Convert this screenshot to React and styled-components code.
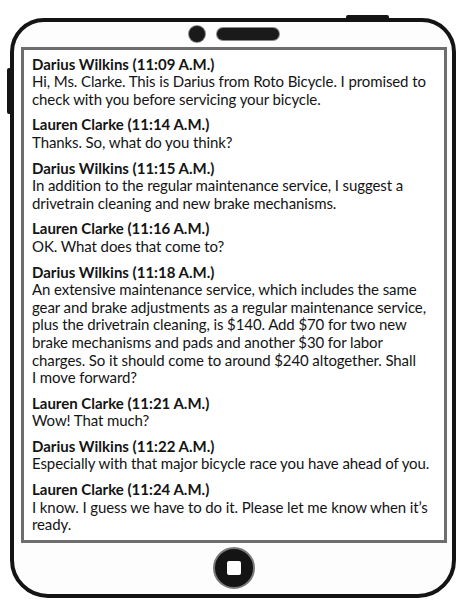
import React from 'react';
import styled, {createGlobalStyle} from 'styled-components';

const GlobalStyle = createGlobalStyle`
    html, body {
        margin: 0;
        padding: 0;
        background: #ffffff;
    }
    body {
        font-family: Lato, "Open Sans", sans-serif;
    }
`;

const Page = styled.div`
    width: 465px;
    height: 607px;
    padding: 18px 9px 9px 10px;
    box-sizing: border-box;
`;

const Phone = styled.div`
    position: relative;
    height: 100%;
    box-sizing: border-box;
    border: 4px solid #141414;
    border-radius: 34px 34px 38px 38px;
    background: #fdfdfd;
    display: flex;
    flex-direction: column;
    padding: 0 5px 0 7px;

    &::before {
        content: '';
        position: absolute;
        top: -7px;
        right: 63px;
        width: 43px;
        height: 5px;
        background: #141414;
        border-radius: 2px 2px 0 0;
    }

    &::after {
        content: '';
        position: absolute;
        left: -7px;
        top: 46px;
        width: 4px;
        height: 46px;
        background: #141414;
        border-radius: 2px 0 0 2px;
    }
`;

const TopBar = styled.div`
    height: 25px;
    display: flex;
    align-items: center;
    justify-content: center;
    gap: 12px;
`;

const Camera = styled.div`
    width: 16px;
    height: 16px;
    border-radius: 50%;
    background: #1a1a1a;
    box-shadow: 0 0 0 1px #888;
`;

const Speaker = styled.div`
    width: 62px;
    height: 12px;
    border-radius: 7px;
    background: #1a1a1a;
    box-shadow: 0 0 0 1px #888;
`;

const Screen = styled.div`
    flex: 1;
    border: 3px solid #6e6e6e;
    background: #ffffff;
    padding: 6px 8px;
    display: flex;
    flex-direction: column;
    gap: 8px;
    color: #141414;
`;

const Message = styled.div`
    font-size: 15px;
    line-height: 17.6px;
`;

const Name = styled.div`
    font-weight: 700;
    white-space: nowrap;
`;

const Line = styled.div`
    white-space: nowrap;
    letter-spacing: -0.1px;
`;

const BottomBar = styled.div`
    height: 52px;
    display: flex;
    align-items: center;
    justify-content: center;
`;

const HomeButton = styled.div`
    width: 38px;
    height: 38px;
    border-radius: 50%;
    background: #141414;
    border: 2px solid #7a7a7a;
    display: flex;
    align-items: center;
    justify-content: center;
`;

const HomeSquare = styled.div`
    width: 14px;
    height: 14px;
    border-radius: 2px;
    background: #ffffff;
`;

const messages = [
    {name: 'Darius Wilkins (11:09 A.M.)', lines: [
        'Hi, Ms. Clarke. This is Darius from Roto Bicycle. I promised to',
        'check with you before servicing your bicycle.',
    ]},
    {name: 'Lauren Clarke (11:14 A.M.)', lines: [
        'Thanks. So, what do you think?',
    ]},
    {name: 'Darius Wilkins (11:15 A.M.)', lines: [
        'In addition to the regular maintenance service, I suggest a',
        'drivetrain cleaning and new brake mechanisms.',
    ]},
    {name: 'Lauren Clarke (11:16 A.M.)', lines: [
        'OK. What does that come to?',
    ]},
    {name: 'Darius Wilkins (11:18 A.M.)', lines: [
        'An extensive maintenance service, which includes the same',
        'gear and brake adjustments as a regular maintenance service,',
        'plus the drivetrain cleaning, is $140. Add $70 for two new',
        'brake mechanisms and pads and another $30 for labor',
        'charges. So it should come to around $240 altogether. Shall',
        'I move forward?',
    ]},
    {name: 'Lauren Clarke (11:21 A.M.)', lines: [
        'Wow! That much?',
    ]},
    {name: 'Darius Wilkins (11:22 A.M.)', lines: [
        'Especially with that major bicycle race you have ahead of you.',
    ]},
    {name: 'Lauren Clarke (11:24 A.M.)', lines: [
        'I know. I guess we have to do it. Please let me know when it\u2019s',
        'ready.',
    ]},
];

const App = () => {
    return (
        <Page>
            <GlobalStyle/>
            <Phone>
                <TopBar>
                    <Camera/>
                    <Speaker/>
                </TopBar>
                <Screen>
                    {messages.map((m, i) => (
                        <Message key={i}>
                            <Name>{m.name}</Name>
                            {m.lines.map((l, j) => <Line key={j}>{l}</Line>)}
                        </Message>
                    ))}
                </Screen>
                <BottomBar>
                    <HomeButton>
                        <HomeSquare/>
                    </HomeButton>
                </BottomBar>
            </Phone>
        </Page>
    );
};

export default App;
